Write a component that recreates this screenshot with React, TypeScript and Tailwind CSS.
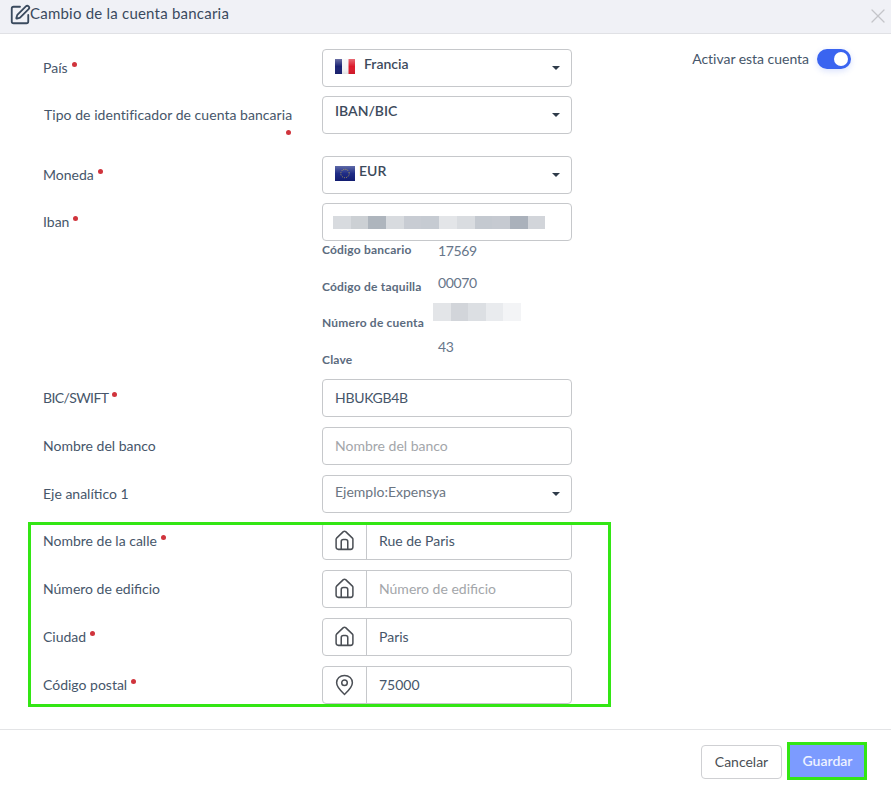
import React from 'react';
import { SquarePen, X } from 'lucide-react';

const Dot = () => <span className="inline-block w-[5px] h-[5px] rounded-full bg-[#d0343c] ml-[4px] mb-[6px]"></span>;

const Caret = () => <span className="absolute right-[11px] top-[16px] w-0 h-0 border-x-[4px] border-x-transparent border-t-[4px] border-t-[#2f3b4a]"></span>;

const FrFlag = () => (
  <svg width="20" height="15" viewBox="0 0 20 15" className="mt-[5px]">
    <defs>
      <linearGradient id="shade" x1="0" y1="0" x2="0" y2="1">
        <stop offset="0" stopColor="#fff" stopOpacity="0.35" />
        <stop offset="0.5" stopColor="#fff" stopOpacity="0" />
        <stop offset="1" stopColor="#000" stopOpacity="0.08" />
      </linearGradient>
    </defs>
    <rect width="7" height="15" fill="#1a2273" />
    <rect x="7" width="6.5" height="15" fill="#f4f4f6" />
    <rect x="13.5" width="6.5" height="15" fill="#dc1a2b" />
    <rect width="20" height="15" fill="url(#shade)" />
  </svg>
);

const EuFlag = () => (
  <svg width="20" height="15" viewBox="0 0 20 15" className="mt-[5px]">
    <defs>
      <linearGradient id="eu" x1="0" y1="0" x2="0" y2="1">
        <stop offset="0" stopColor="#5f6aa8" />
        <stop offset="0.5" stopColor="#1f2c86" />
        <stop offset="1" stopColor="#121c70" />
      </linearGradient>
    </defs>
    <rect width="20" height="15" fill="url(#eu)" />
    <circle cx="10" cy="7.5" r="4.2" fill="none" stroke="#c9b34a" strokeWidth="0.9" strokeDasharray="0.9 1.3" />
  </svg>
);

const HouseIcon = () => (
  <svg width="21" height="21" viewBox="0 0 18 18" fill="none" stroke="#4b4f55" strokeWidth="1.3" strokeLinejoin="round" strokeLinecap="round">
    <path d="M2.2 7 L8 1.4 Q9 0.6 10 1.4 L15.8 7 Q16.2 7.4 16.2 8 V14.6 Q16.2 16.6 14.2 16.6 H3.8 Q1.8 16.6 1.8 14.6 V8 Q1.8 7.4 2.2 7 Z" />
    <path d="M6.2 16.4 V10 Q6.2 8.2 8 8.2 H10 Q11.8 8.2 11.8 10 V16.4" />
  </svg>
);

const PinIcon = () => (
  <svg width="21" height="22" viewBox="0 0 18 19" fill="none" stroke="#4b4f55" strokeWidth="1.3" strokeLinejoin="round">
    <path d="M9 1.2 C5 1.2 2.2 4 2.2 7.6 C2.2 11.6 6.6 15.4 9 17.6 C11.4 15.4 15.8 11.6 15.8 7.6 C15.8 4 13 1.2 9 1.2 Z" />
    <circle cx="9" cy="7.6" r="2.4" />
  </svg>
);

const Row = ({ label, required, className, labelCls, children }: { label: string; required?: boolean; className: string; labelCls?: string; children: React.ReactNode }) => (
  <div className={`flex items-start ${className}`}>
    <div className="w-[279px] pt-[10px] text-[14px] leading-[17px] text-[#46566a]">
      <span className={labelCls}>{label}</span>{required && <Dot />}
    </div>
    {children}
  </div>
);

const boxCls = 'w-[250px] h-[38px] rounded-[4px] border border-[#c6c8cb] bg-white';

const SelectBox = ({ children, muted }: { children: React.ReactNode; muted?: boolean }) => (
  <div className={`${boxCls} relative flex items-start gap-[9px] pl-[12px] text-[14px] leading-[20px] ${muted ? 'pt-[6px] text-[#6b7582]' : 'pt-[4px] font-semibold text-[#3c4a5c]'}`}>
    {children}
    <Caret />
  </div>
);

const TextBox = ({ value, placeholder, textCls }: { value?: string; placeholder?: string; textCls?: string }) => (
  <div className={`${boxCls} flex items-center px-[12px] pb-[2px] text-[14px] ${value ? 'text-[#46566a]' : 'text-[#a3a6aa]'} ${textCls || ''}`}>{value || placeholder}</div>
);

const IconBox = ({ icon, value, placeholder }: { icon: React.ReactNode; value?: string; placeholder?: string }) => (
  <div className={`${boxCls} flex items-stretch text-[14px]`}>
    <div className="w-[44px] shrink-0 flex items-center justify-center border-r border-[#c6c8cb] pb-[1px]">{icon}</div>
    <div className={`flex items-center pl-[12px] pb-[2px] ${value ? 'text-[#46566a]' : 'text-[#a3a6aa]'}`}>{value || placeholder}</div>
  </div>
);

const subLabel = 'shrink-0 text-[12px] tracking-[0.2px] leading-[14px] font-bold text-[#5b6b7e] whitespace-nowrap';
const subValue = 'text-[14px] tracking-[-0.4px] leading-[16px] text-[#67768a]';

const Sub = ({ label, value, labelPt, valuePt, height }: { label: string; value?: string; labelPt: string; valuePt: string; height: string }) => (
  <div className={`flex items-start ${height}`}>
    <div className={`w-[116px] ${subLabel} ${labelPt}`}>{label}</div>
    {value && <div className={`${subValue} ${valuePt}`}>{value}</div>}
  </div>
);

const ibanBlur = ['#d8dbdf', '#ccd0d4', '#aeb5bd', '#d8dbdf', '#c8ccd3', '#c6cbd2', '#e3e5e8', '#d9dce0', '#c4c9d0', '#c6cad1', '#aab1bb', '#d2d5da'];
const accountBlur = ['#e3e5e8', '#d2d5da', '#dcdfe3', '#e9ebee', '#f3f4f6'];

export default function App() {
  return (
    <div className="w-[891px] h-[787px] bg-white flex flex-col font-[Lato,sans-serif] overflow-hidden">
      <div className="h-[34px] shrink-0 bg-[#f0f1f6] border-b border-[#e0e1e5] flex items-center pl-[9px] pr-[1px]">
        <SquarePen size={22} strokeWidth={2} className="text-[#3a4a5e] mb-[4px] -mr-[1px]" />
        <span className="text-[15px] tracking-[0.22px] text-[#3a4a5e] mb-[6px]">Cambio de la cuenta bancaria</span>
        <X size={24} strokeWidth={1.3} className="ml-auto text-[#c4c5c9] mb-[2px]" />
      </div>

      <div className="flex-1 relative pl-[43px] pt-[15px]">
        <div className="absolute top-[14px] right-[40px] flex items-center gap-[8px]">
          <span className="text-[14px] tracking-[-0.03px] text-[#46566a]">Activar esta cuenta</span>
          <span className="w-[34px] h-[20px] rounded-full bg-[#3a64f0] flex items-center justify-end pr-[3px] shadow-[0_2px_6px_rgba(58,100,240,0.2)]">
            <span className="w-[14px] h-[14px] rounded-full bg-white"></span>
          </span>
        </div>

        <Row label="País" required className="mb-[9px]">
          <SelectBox><FrFlag /><span>Francia</span></SelectBox>
        </Row>
        <div className="flex items-start h-[38px] mb-[22px]">
          <div className="w-[279px] pl-[1px] pr-[31px] pt-[10px] text-[14px] leading-[17px] text-[#46566a] text-right whitespace-nowrap">
            <div className="text-left tracking-[0.05px]">Tipo de identificador de cuenta bancaria</div>
            <div className="leading-[14px] pt-[6px]"><Dot /></div>
          </div>
          <SelectBox>IBAN/BIC</SelectBox>
        </div>
        <Row label="Moneda" required className="mb-[9px]">
          <SelectBox><EuFlag /><span className="-ml-[5px]">EUR</span></SelectBox>
        </Row>
        <Row label="Iban" required className="">
          <div className={`${boxCls} flex items-center pl-[10px]`}>
            {ibanBlur.map((c, i) => <span key={i} className="w-[17.7px] h-[13px]" style={{ backgroundColor: c }}></span>)}
          </div>
        </Row>

        <div className="ml-[279px] h-[138px]">
          <Sub label="Código bancario" value="17569" labelPt="pt-[2px]" valuePt="pt-[2px]" height="h-[36px]" />
          <Sub label="Código de taquilla" value="00070" labelPt="pt-[3px]" valuePt="-mt-[2px]" height="h-[37px]" />
          <div className="flex items-start h-[36px]">
            <div className={`w-[111px] pt-[2px] ${subLabel}`}>Número de cuenta</div>
            <div className="flex -mt-[11px]">
              {accountBlur.map((c, i) => <span key={i} className="w-[17.6px] h-[18px]" style={{ backgroundColor: c }}></span>)}
            </div>
          </div>
          <div className="flex items-start">
            <div className={`w-[116px] pt-[3px] ${subLabel}`}>Clave</div>
            <div className={`${subValue} -mt-[11px]`}>43</div>
          </div>
        </div>

        <Row label="BIC/SWIFT" required className="mb-[10px]" labelCls="tracking-[-0.6px]"><TextBox value="HBUKGB4B" textCls="tracking-[-0.3px]" /></Row>
        <Row label="Nombre del banco" className="mb-[10px]"><TextBox placeholder="Nombre del banco" /></Row>
        <Row label="Eje analítico 1" className="mb-[9px]"><SelectBox muted>Ejemplo:Expensya</SelectBox></Row>

        <div className="relative flex flex-col gap-[10px]">
          <Row label="Nombre de la calle" required className=""><IconBox icon={<HouseIcon />} value="Rue de Paris" /></Row>
          <Row label="Número de edificio" className=""><IconBox icon={<HouseIcon />} placeholder="Número de edificio" /></Row>
          <Row label="Ciudad" required className=""><IconBox icon={<HouseIcon />} value="Paris" /></Row>
          <Row label="Código postal" required className=""><IconBox icon={<PinIcon />} value="75000" /></Row>
          <div className="absolute -left-[15px] top-0 w-[583px] h-[185px] border-[3px] border-[#33e614] pointer-events-none"></div>
        </div>
      </div>

      <div className="h-[58px] shrink-0 border-t border-[#e3e4e6] flex items-start justify-end gap-[5px] pt-[12px] pr-[24px]">
        <button className="w-[81px] h-[34px] mt-[3px] pb-[2px] rounded-[4px] border border-[#cfd0d3] bg-white text-[14px] text-[#4b4f55]">Cancelar</button>
        <button className="w-[80px] h-[38px] pb-[2px] pl-[1px] border-[3px] border-[#33e614] bg-[#7c9bff] text-[14px] font-semibold text-[#eef2ff]">Guardar</button>
      </div>
    </div>
  );
}
